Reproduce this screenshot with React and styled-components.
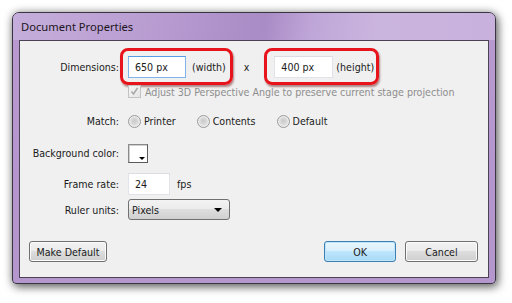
import React from 'react';
import styled, { createGlobalStyle } from 'styled-components';

const GlobalStyle = createGlobalStyle`
  html, body {
    margin: 0;
    padding: 0;
    background: #ffffff;
  }
  body {
    font-family: Tahoma, 'DejaVu Sans', 'Liberation Sans', sans-serif;
    font-size: 11px;
    color: #1a1a1a;
  }
`;

const Page = styled.div`
  width: 512px;
  height: 303px;
  padding: 12px 0 0 12px;
  box-sizing: border-box;
`;

const Window = styled.div`
  width: 484px;
  height: 272px;
  box-sizing: border-box;
  border: 1px solid #3a3443;
  border-radius: 7px 7px 4px 4px;
  background: linear-gradient(180deg, #b99ad0 0%, #b495cd 60%, #b497cd 100%);
  box-shadow: 2px 3px 10px rgba(0, 0, 0, 0.55), 0 0 8px rgba(0, 0, 0, 0.25);
  display: flex;
  flex-direction: column;
  padding: 0 6px 5px 6px;
  overflow: hidden;
`;

const TitleBar = styled.div`
  height: 27px;
  margin: 0 -6px;
  padding-left: 8px;
  display: flex;
  align-items: center;
  font-family: 'Noto Sans', 'Open Sans', sans-serif;
  font-size: 11.2px;
  color: #1b1520;
  background: linear-gradient(
    100deg,
    #c5aedb 0%,
    #b89cd1 30%,
    #a98bc5 52%,
    #bfa6d8 62%,
    #cab5de 75%,
    #c8b2dd 100%
  );
`;

const Client = styled.div`
  flex: 1;
  border: 1px solid #4b4355;
  background: #f0f0f0;
  display: flex;
  flex-direction: column;
  padding: 7px 9px 15px 9px;
  font-family: 'DejaVu Sans Condensed', 'DejaVu Sans', sans-serif;
  font-size: 10.6px;
`;

const Row = styled.div`
  display: flex;
  align-items: center;
  height: ${(p) => p.h || 20}px;
  margin-top: ${(p) => p.mt || 0}px;
`;

const Label = styled.div`
  width: 100px;
  padding-right: 1px;
  text-align: right;
  box-sizing: border-box;
  margin-left: -9px;
  margin-right: ${(p) => (p.tight ? 0 : 8)}px;
  flex-shrink: 0;
  white-space: nowrap;
`;

const Highlight = styled.div`
  display: flex;
  align-items: center;
  gap: ${(p) => p.gap}px;
  height: 37px;
  box-sizing: border-box;
  border: 3px solid #e8141c;
  border-radius: 8px;
  padding: 0 ${(p) => p.pr}px 0 ${(p) => p.pl}px;
  box-shadow: 1px 2px 2px rgba(90, 0, 0, 0.45);
`;

const TextBox = styled.div`
  width: ${(p) => p.w}px;
  height: 22px;
  box-sizing: border-box;
  background: #ffffff;
  border: 1px solid ${(p) => (p.focused ? '#7eb4ea' : '#e2e3ea')};
  border-top-color: ${(p) => (p.focused ? '#569de5' : '#dadbe3')};
  display: flex;
  align-items: center;
  padding-left: 6px;
  white-space: nowrap;
`;

const Times = styled.span`
  margin: 0 15px 0 11px;
`;

const Checkbox = styled.span`
  width: 11px;
  height: 11px;
  border: 1px solid #c3c3c3;
  background: linear-gradient(135deg, #f4f4f4, #e6e6e6);
  display: inline-flex;
  align-items: center;
  justify-content: center;
  flex-shrink: 0;
`;

const Disabled = styled.span`
  color: #8e8e8e;
  margin-left: 4px;
  white-space: nowrap;
`;

const Radio = styled.span`
  width: 11px;
  height: 11px;
  border-radius: 50%;
  border: 1px solid #9a9a9a;
  background: radial-gradient(circle at 50% 45%, #c9c9c9 0%, #dcdcdc 45%, #f6f6f6 100%);
  box-shadow: inset 0 0 0 1px #ededed;
  flex-shrink: 0;
`;

const RadioItem = styled.label`
  display: flex;
  align-items: center;
  gap: 3px;
  margin-right: ${(p) => p.mr}px;
`;

const Swatch = styled.div`
  position: relative;
  width: 20px;
  height: 19px;
  box-sizing: border-box;
  border: 1px solid #8a8a8a;
  border-right-color: #5a5a5a;
  border-bottom-color: #5a5a5a;
  background: #ffffff;
  box-shadow: inset 1px 1px 0 #d0d0d0;
`;

const SwatchArrow = styled.span`
  position: absolute;
  right: 2px;
  bottom: 2px;
  width: 0;
  height: 0;
  border-left: 3px solid transparent;
  border-right: 3px solid transparent;
  border-top: 3px solid #000;
`;

const Unit = styled.span`
  margin-left: 7px;
`;

const Select = styled.div`
  width: 102px;
  height: 21px;
  box-sizing: border-box;
  border: 1px solid #707070;
  border-radius: 3px;
  background: linear-gradient(180deg, #f3f3f3 0%, #ececec 45%, #dedede 50%, #d0d0d0 100%);
  display: flex;
  align-items: center;
  justify-content: space-between;
  padding: 0 7px 0 3px;
`;

const Arrow = styled.span`
  width: 0;
  height: 0;
  border-left: 4px solid transparent;
  border-right: 4px solid transparent;
  border-top: 4px solid #000;
`;

const Footer = styled.div`
  margin-top: auto;
  display: flex;
  align-items: center;
`;

const Button = styled.button`
  height: 21px;
  width: ${(p) => p.w}px;
  box-sizing: border-box;
  font: inherit;
  color: #1a1a1a;
  border: 1px solid ${(p) => (p.primary ? '#3c7fb1' : '#707070')};
  border-radius: 3px;
  background: ${(p) =>
    p.primary
      ? 'linear-gradient(180deg, #eaf6fd 0%, #d9f0fc 45%, #bee6fd 50%, #a7d9f5 100%)'
      : 'linear-gradient(180deg, #f2f2f2 0%, #ebebeb 45%, #dddddd 50%, #cfcfcf 100%)'};
  box-shadow: inset 0 0 0 1px ${(p) => (p.primary ? '#c0e4f9' : '#fbfbfb')};
  padding: 0;
  margin-left: ${(p) => p.ml || 0}px;
`;

const App = () => {
  return (
    <>
      <GlobalStyle />
      <Page>
        <Window>
          <TitleBar>Document Properties</TitleBar>
          <Client>
            <Row h={37}>
              <Label tight>Dimensions:</Label>
              <Highlight pl={5} pr={4} gap={6}>
                <TextBox w={58} focused>650 px</TextBox>
                <span>(width)</span>
              </Highlight>
              <Times>x</Times>
              <Highlight pl={7} pr={2} gap={3}>
                <TextBox w={59}>400 px</TextBox>
                <span>(height)</span>
              </Highlight>
            </Row>
            <Row h={13}>
              <Label />
              <Checkbox>
                <svg width="9" height="9" viewBox="0 0 9 9">
                  <path d="M1.5 4.5 L3.5 7 L7.5 1" fill="none" stroke="#aaaaaa" strokeWidth="1.6" />
                </svg>
              </Checkbox>
              <Disabled>Adjust 3D Perspective Angle to preserve current stage projection</Disabled>
            </Row>
            <Row mt={13}>
              <Label>Match:</Label>
              <RadioItem mr={21}>
                <Radio />
                Printer
              </RadioItem>
              <RadioItem mr={21}>
                <Radio />
                Contents
              </RadioItem>
              <RadioItem mr={0}>
                <Radio />
                Default
              </RadioItem>
            </Row>
            <Row mt={12}>
              <Label>Background color:</Label>
              <Swatch>
                <SwatchArrow />
              </Swatch>
            </Row>
            <Row h={22} mt={10}>
              <Label>Frame rate:</Label>
              <TextBox w={42}>24</TextBox>
              <Unit>fps</Unit>
            </Row>
            <Row h={21} mt={4}>
              <Label>Ruler units:</Label>
              <Select>
                Pixels
                <Arrow />
              </Select>
            </Row>
            <Footer>
              <Button w={78}>Make Default</Button>
              <Button w={72} primary ml={217}>OK</Button>
              <Button w={73} ml={9}>Cancel</Button>
            </Footer>
          </Client>
        </Window>
      </Page>
    </>
  );
};

export default App;
